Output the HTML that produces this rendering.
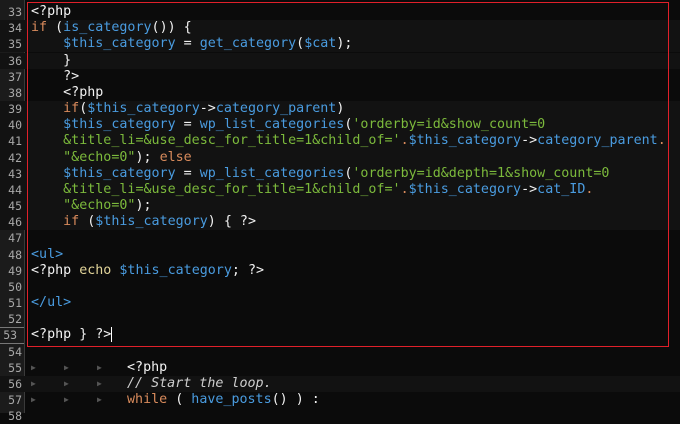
<!DOCTYPE html><html><head><style>
body{margin:0;width:680px;height:413px;background:#0b0b0b;overflow:hidden;position:relative;font-family:"DejaVu Sans Mono","Liberation Mono",monospace;font-size:13.35px}
.g{position:absolute;left:0;top:0;width:24px;height:413px;background:#1b1b1b;border-right:1px solid #3a3a3a}
.l{position:absolute;left:0;height:16.17px;line-height:16.17px;width:680px;white-space:pre}
.n{position:absolute;left:0;width:22px;text-align:right;color:#a8a8a8;font-size:11.5px}
.c{position:absolute;left:31px;color:#f2f2f2}
.k{color:#d98b5c}.b{color:#4a9ce0}.s{color:#7cba3c}.y{color:#e3d59a}.cm{color:#cfcfcf;font-style:italic}.o{color:#d98b5c}
.hl{background:#121212}
.box{position:absolute;left:27px;top:2px;width:640px;height:343px;border:1px solid #e0202a}
.ar{position:absolute;color:#555;font-size:8px}
</style></head><body>
<div class="g"></div>
<div class="l" style="top:-12.2px"><span class="n">32</span></div>
<div class="l" style="top:4px"><span class="n">33</span><span class="c">&lt;?php</span></div>
<div class="l hl" style="top:20.2px"><span class="n">34</span><span class="c"><span class="k">if</span> (<span class="b">is_category</span>()) {</span></div>
<div class="l hl" style="top:36.3px"><span class="n">35</span><span class="c">    <span class="b">$this_category</span> = <span class="b">get_category</span>(<span class="b">$cat</span>);</span></div>
<div class="l hl" style="top:52.5px"><span class="n">36</span><span class="c">    }</span></div>
<div class="l" style="top:68.7px"><span class="n">37</span><span class="c">    ?&gt;</span></div>
<div class="l" style="top:84.9px"><span class="n">38</span><span class="c">    &lt;?php</span></div>
<div class="l hl" style="top:101px"><span class="n">39</span><span class="c">    <span class="k">if</span>(<span class="b">$this_category</span>-&gt;<span class="b">category_parent</span>)</span></div>
<div class="l hl" style="top:117.2px"><span class="n">40</span><span class="c">    <span class="b">$this_category</span> = <span class="b">wp_list_categories</span>(<span class="s">'orderby=id&amp;show_count=0</span></span></div>
<div class="l hl" style="top:133.4px"><span class="n">41</span><span class="c">    <span class="s">&amp;title_li=&amp;use_desc_for_title=1&amp;child_of='</span><span class="o">.</span><span class="b">$this_category</span>-&gt;<span class="b">category_parent</span><span class="o">.</span></span></div>
<div class="l hl" style="top:149.6px"><span class="n">42</span><span class="c">    <span class="s">"&amp;echo=0"</span>); <span class="k">else</span></span></div>
<div class="l hl" style="top:165.7px"><span class="n">43</span><span class="c">    <span class="b">$this_category</span> = <span class="b">wp_list_categories</span>(<span class="s">'orderby=id&amp;depth=1&amp;show_count=0</span></span></div>
<div class="l hl" style="top:181.9px"><span class="n">44</span><span class="c">    <span class="s">&amp;title_li=&amp;use_desc_for_title=1&amp;child_of='</span><span class="o">.</span><span class="b">$this_category</span>-&gt;<span class="b">cat_ID</span><span class="o">.</span></span></div>
<div class="l hl" style="top:198.1px"><span class="n">45</span><span class="c">    <span class="s">"&amp;echo=0"</span>);</span></div>
<div class="l hl" style="top:214.2px"><span class="n">46</span><span class="c">    <span class="k">if</span> (<span class="b">$this_category</span>) { ?&gt;</span></div>
<div class="l" style="top:230.4px"><span class="n">47</span></div>
<div class="l" style="top:246.6px"><span class="n">48</span><span class="c"><span class="b">&lt;ul&gt;</span></span></div>
<div class="l" style="top:262.8px"><span class="n">49</span><span class="c">&lt;?php <span class="y">echo</span> <span class="b">$this_category</span>; ?&gt;</span></div>
<div class="l" style="top:278.9px"><span class="n">50</span></div>
<div class="l" style="top:295.1px"><span class="n">51</span><span class="c"><span class="b">&lt;/ul&gt;</span></span></div>
<div class="l" style="top:311.3px"><span class="n">52</span></div>
<div class="l" style="top:327.4px"><span class="n" style="border-top:1px solid #777;border-bottom:1px solid #777;height:15px;line-height:15px;width:24px">53 </span><span class="c">&lt;?php } ?&gt;<span style="border-left:1px solid #fff"></span></span></div>
<div class="l" style="top:343.6px"><span class="n">54</span></div>
<div class="l" style="top:359.8px"><span class="n">55</span><span class="ar" style="left:31px">▶</span><span class="ar" style="left:64px">▶</span><span class="ar" style="left:97px">▶</span><span class="c" style="left:127px">&lt;?php</span></div>
<div class="l hl" style="top:376px"><span class="n">56</span><span class="ar" style="left:31px">▶</span><span class="ar" style="left:64px">▶</span><span class="ar" style="left:97px">▶</span><span class="c cm" style="left:127px">// Start the loop.</span></div>
<div class="l" style="top:392.1px"><span class="n">57</span><span class="ar" style="left:31px">▶</span><span class="ar" style="left:64px">▶</span><span class="ar" style="left:97px">▶</span><span class="c" style="left:127px"><span class="k">while</span> ( <span class="b">have_posts</span>() ) :</span></div>
<div class="l" style="top:408.3px"><span class="n">58</span></div>
<div class="box"></div>
</body></html>
